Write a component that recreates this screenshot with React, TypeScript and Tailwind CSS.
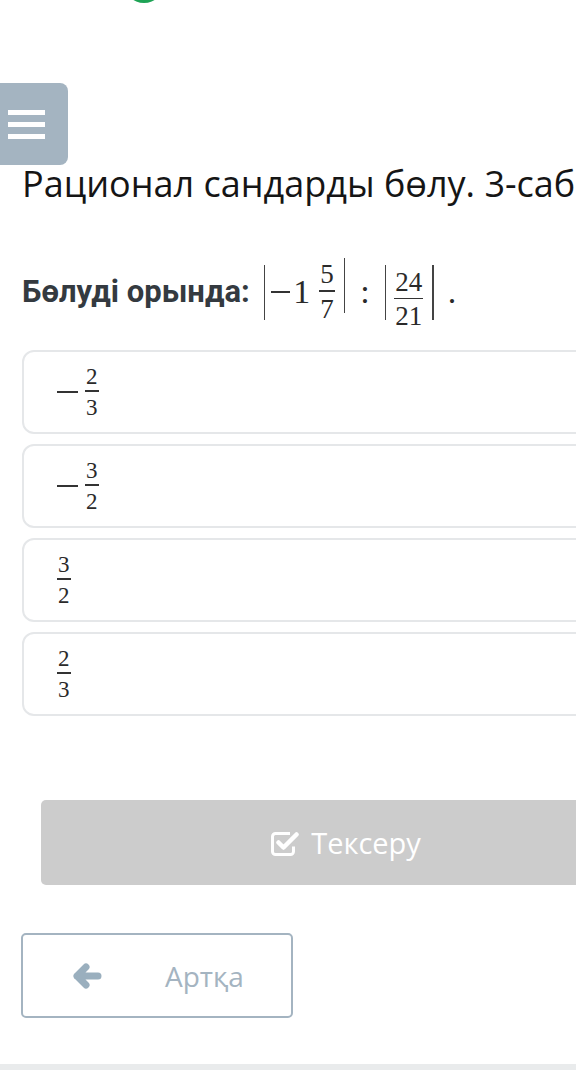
const serif = "font-['Liberation_Serif','DejaVu_Serif',serif]";

function Frac({ top, bottom, size = "text-[23px]" }: { top: string; bottom: string; size?: string }) {
  return (
    <span className={`inline-flex flex-col items-center leading-none font-['Liberation_Serif','DejaVu_Serif',serif] ${size}`}>
      <span className="px-[1px] pb-[2px]">{top}</span>
      <span className="h-[1.5px] w-full bg-[#333]" />
      <span className="px-[1px] pt-[4px]">{bottom}</span>
    </span>
  );
}

function Bar() {
  return <span className="inline-block h-[55px] w-[1.5px] bg-[#444]" />;
}

function Option({ neg, top, bottom }: { neg?: boolean; top: string; bottom: string }) {
  return (
    <div className="flex h-[84px] items-center rounded-[12px] border-2 border-[#e5e7e9] bg-white pl-[33px]">
      <div className={`flex items-center text-[#2a2a2a] ${serif}`}>
        {neg && <span className="mr-[7px] inline-block h-[1.5px] w-[21px] bg-[#333]" />}
        <Frac top={top} bottom={bottom} />
      </div>
    </div>
  );
}

function CheckIcon() {
  return (
    <svg width="30" height="28" viewBox="0 0 30 28" fill="none">
      <path d="M21 4.5H6.5a3 3 0 0 0-3 3v15a3 3 0 0 0 3 3h15a3 3 0 0 0 3-3v-5" stroke="white" strokeWidth="3" />
      <path d="M9.5 13.5l5 5L27.5 5.5" stroke="white" strokeWidth="4.5" strokeLinecap="round" strokeLinejoin="round" />
    </svg>
  );
}

function ArrowIcon() {
  return (
    <svg width="30" height="26" viewBox="0 0 30 26" fill="none">
      <path d="M5 13h21M14 4l-9 9 9 9" stroke="#9aafbe" strokeWidth="7" strokeLinecap="round" strokeLinejoin="round" />
    </svg>
  );
}

export default function App() {
  return (
    <div className="relative h-[1070px] w-[576px] overflow-hidden bg-white font-['Open_Sans',sans-serif]">
      <div className="absolute left-[124px] top-[-37px] h-[40px] w-[40px] rounded-full bg-[#1ea355]" />

      <div className="w-[680px] pt-[83px]">
        <button className="flex h-[82px] w-[68px] flex-col justify-center gap-[7px] rounded-r-[8px] bg-[#a4b4c1] pl-[8px]">
          <span className="block h-[5px] w-[37px] bg-white" />
          <span className="block h-[5px] w-[37px] bg-white" />
          <span className="block h-[5px] w-[37px] bg-white" />
        </button>

        <h1 className="ml-[22px] mt-[-4px] whitespace-nowrap text-[36px] leading-[46px] text-[#151515]">
          Рационал сандарды бөлу. 3-сабақ
        </h1>

        <div className="ml-[22px] mt-[55px] flex h-[60px] items-center">
          <span className="font-['Roboto',sans-serif] text-[31px] font-bold text-[#343a40]">Бөлуді орында:</span>
          <span className={`ml-[14px] flex items-center text-[#2a2a2a] ${serif} text-[34px]`}>
            <Bar />
            <span className="ml-[6px] inline-block h-[1.5px] w-[19px] bg-[#333]" />
            <span className="ml-[3px] mr-[9px] leading-none">1</span>
            <Frac top="5" bottom="7" size="text-[27px]" />
            <span className="ml-[9px]"><Bar /></span>
            <span className="mx-[15px] leading-none">:</span>
            <Bar />
            <span className="ml-[8px] mr-[9px]">
              <Frac top="24" bottom="21" size="text-[27px]" />
            </span>
            <Bar />
            <span className="ml-[14px] leading-none">.</span>
          </span>
        </div>

        <div className="ml-[22px] mt-[28px] flex flex-col gap-[10px]">
          <Option neg top="2" bottom="3" />
          <Option neg top="3" bottom="2" />
          <Option top="3" bottom="2" />
          <Option top="2" bottom="3" />
        </div>

        <button className="ml-[41px] mt-[84px] flex h-[85px] w-[608px] items-center justify-center gap-[12px] rounded-[5px] bg-[#cccccc] text-[29px] text-white">
          <CheckIcon />
          <span>Тексеру</span>
        </button>

        <button className="ml-[21px] mt-[48px] flex h-[85px] w-[272px] items-center rounded-[5px] border-2 border-[#a4b4c1] bg-white text-[28px] text-[#a4b4c1]">
          <span className="ml-[49px]"><ArrowIcon /></span>
          <span className="ml-[63px]">Артқа</span>
        </button>
      </div>

      <div className="absolute bottom-0 left-0 h-[6px] w-full bg-[#e9ebec]" />
    </div>
  );
}
